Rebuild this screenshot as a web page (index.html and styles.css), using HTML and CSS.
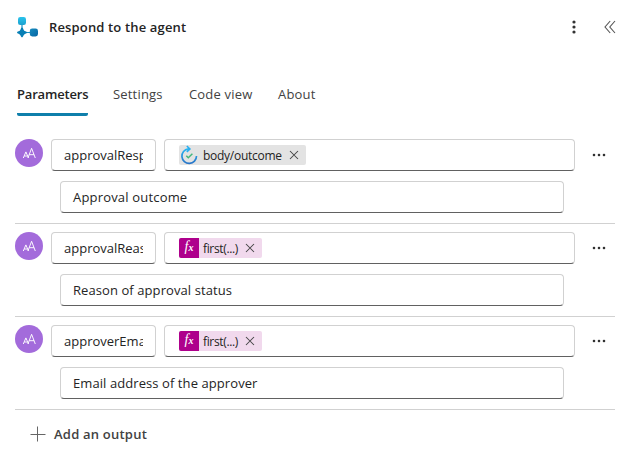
FILE: index.html
```html
<!DOCTYPE html>
<html lang="en">
<head>
<meta charset="utf-8">
<title>Respond to the agent</title>
<link rel="stylesheet" href="styles.css">
</head>
<body>
<svg class="defs" aria-hidden="true">
  <symbol id="close" viewBox="0 0 10 10"><path d="M1 1l8 8M9 1l-8 8" fill="none" stroke="#424242" stroke-width="1.05"/></symbol>
  <symbol id="more" viewBox="0 0 14 4"><path d="M1 1h2v2h-2zM6 1h2v2h-2zM11 1h2v2h-2z" fill="#333" stroke="#333" stroke-width=".3"/></symbol>
  <symbol id="text-type" viewBox="0 0 28 28"><path d="M8.3 19l2.6-6.1 2.6 6.1M9.3 17h3.2M12.9 19l3.7-9.7L20.3 19M14.2 15.7h4.8" fill="none" stroke="#fff" stroke-width=".95"/></symbol>
</svg>
<main class="panel">
  <header class="header">
    <svg class="logo" viewBox="0 0 22 22">
      <defs>
        <linearGradient id="node" x2="0" y2="1"><stop stop-color="#29c3ec"/><stop offset="1" stop-color="#1ba1cf"/></linearGradient>
        <linearGradient id="node-dark" x2="1" y2="1"><stop stop-color="#168bbe"/><stop offset="1" stop-color="#0766a4"/></linearGradient>
      </defs>
      <path d="M5 8v5M8 16.5h6" stroke="#1793c4" stroke-width="1.2"/>
      <rect x="1" y="1" width="8" height="8" rx="2.3" fill="url(#node)"/>
      <path d="M5 11.6Q6 11.6 6.5 13.4Q7 14.8 8.4 15.3Q10 15.8 10 16.5Q10 17.2 8.4 17.7Q7 18.2 6.5 19.6Q6 21.4 5 21.4Q4 21.4 3.5 19.6Q3 18.2 1.6 17.7Q0 17.2 0 16.5Q0 15.8 1.6 15.3Q3 14.8 3.5 13.4Q4 11.6 5 11.6Z" fill="#087fb5"/>
      <rect x="12.8" y="12.6" width="8.2" height="7.8" rx="2.4" fill="url(#node-dark)"/>
    </svg>
    <h1 class="title"><span>Respond to the agent</span></h1>
    <svg class="menu" viewBox="0 0 4 14"><g fill="#333"><circle cx="2" cy="2" r="1.6"/><circle cx="2" cy="7" r="1.6"/><circle cx="2" cy="12" r="1.6"/></g></svg>
    <svg class="collapse" viewBox="0 0 12 14"><path d="M6.2 1L1 7l5.2 6M11 1L5.8 7l5.2 6" fill="none" stroke="#555" stroke-width="1.1"/></svg>
  </header>
  <nav class="tabs">
    <span class="tab tab-active">Parameters</span>
    <span class="tab tab-settings">Settings</span>
    <span class="tab tab-code">Code view</span>
    <span class="tab tab-about">About</span>
  </nav>
  <section class="outputs">
    <div class="output">
      <div class="fields">
        <svg class="avatar"><use href="#text-type"/></svg>
        <div class="field name"><span class="clip">approvalResponse</span></div>
        <div class="field value">
          <span class="token token-body">
            <svg class="approval" viewBox="0 0 20 20"><defs><linearGradient id="ring" x2="0" y2="1"><stop stop-color="#27b5f2"/><stop offset="1" stop-color="#2875c8"/></linearGradient></defs><path d="M10.5 3.8H9.3A7.3 7.3 0 1 0 17.5 11" fill="none" stroke="url(#ring)" stroke-width="1.7"/><path d="M7.8 1l3.1 2.9-3.1 2.9" fill="none" stroke="#27aef0" stroke-width="1.6"/><path d="M7.3 10.7l2 2 4.1-4" fill="none" stroke="#43b77c" stroke-width="1.5"/></svg>
            <span class="token-label label-body">body/outcome</span><svg class="close"><use href="#close"/></svg>
          </span>
        </div>
        <svg class="more"><use href="#more"/></svg>
      </div>
      <div class="field description d1"><span>Approval outcome</span></div>
    </div>
    <div class="output">
      <div class="fields">
        <svg class="avatar"><use href="#text-type"/></svg>
        <div class="field name"><span class="clip">approvalReason</span></div>
        <div class="field value">
          <span class="token token-fx"><span class="fx">f<small>x</small></span><span class="token-label label-fx">first(...)</span><svg class="close"><use href="#close"/></svg></span>
        </div>
        <svg class="more"><use href="#more"/></svg>
      </div>
      <div class="field description d2"><span>Reason of approval status</span></div>
    </div>
    <div class="output">
      <div class="fields">
        <svg class="avatar"><use href="#text-type"/></svg>
        <div class="field name"><span class="clip">approverEmail</span></div>
        <div class="field value">
          <span class="token token-fx"><span class="fx">f<small>x</small></span><span class="token-label label-fx">first(...)</span><svg class="close"><use href="#close"/></svg></span>
        </div>
        <svg class="more"><use href="#more"/></svg>
      </div>
      <div class="field description d3"><span>Email address of the approver</span></div>
    </div>
  </section>
  <div class="add">
    <svg class="plus" viewBox="0 0 16 16"><path d="M7.5 .5v15M.5 8.5h15" stroke="#666" stroke-width="1"/></svg>
    <span>Add an output</span>
  </div>
</main>
</body>
</html>
```
FILE: styles.css
```css
* { box-sizing: border-box; }
body { margin: 0; background: #fff; color: #242424; font: 13px/20px "Open Sans", "Noto Sans", sans-serif; }
svg { display: block; flex: none; }
.defs { width: 0; height: 0; position: absolute; }
.panel { width: 628px; height: 458px; overflow: hidden; }
.header { display: flex; align-items: center; height: 54px; padding: 0 12px 0 17px; }
.logo { width: 22px; height: 22px; }
.title { flex: 1; margin: 0 0 0 10px; font-size: 13px; font-weight: 600; letter-spacing: .15px; white-space: nowrap; }
.menu { width: 4px; height: 14px; margin-right: 28px; }
.collapse { width: 12px; height: 14px; }
.tabs { display: flex; gap: 25px; padding: 30px 0 0 17px; height: 62px; }
.tab { white-space: nowrap; color: #424242; letter-spacing: .18px; }
.tab-active { width: 71px; height: 32px; color: #242424; font-weight: 600; letter-spacing: -.18px; border-bottom: 3px solid #0f7fab; border-radius: 0 0 2px 2px; }
.tab-settings { width: 51px; }
.tab-code { width: 64px; }
.outputs { margin: 15px 13px 0 15px; }
.output { height: 93px; padding-top: 8px; border-bottom: 1px solid #d1d1d1; }
.fields { display: flex; }
.avatar { width: 28px; height: 28px; margin-right: 8px; border-radius: 50%; background: #a36bdb; }
.field { display: flex; align-items: center; height: 32px; padding: 0 12px; border: 1px solid #d1d1d1; border-bottom-color: #616161; border-radius: 4px; white-space: nowrap; }
.name { width: 105px; margin-right: 8px; }
.clip { overflow: hidden; }
.value { width: 411px; padding-left: 14px; }
.more { width: 14px; height: 4px; margin: 14px 0 0 17px; }
.description { width: 504px; margin: 10px 0 0 45px; letter-spacing: .08px; }
.d1 { letter-spacing: .18px; }
.token { display: flex; align-items: center; height: 20px; border-radius: 2px; font-size: 12px; }
.token-body { width: 127px; background: #e3e3e3; }
.token-fx { width: 83px; background: #f1d9ed; }
.token-label { padding-top: 2px; }
.approval { width: 20px; height: 20px; margin-right: 4px; }
.fx { width: 20px; height: 20px; margin-right: 4px; border-radius: 2px 0 0 2px; background: #ae008c; color: #fff; font: italic 14px/18px "Liberation Serif", serif; text-align: center; }
.fx small { font-size: 10px; font-weight: bold; }
.label-body { width: 86px; letter-spacing: -.27px; }
.label-fx { width: 42px; letter-spacing: -.35px; }
.close { width: 10px; height: 10px; }
.add { display: flex; align-items: center; gap: 8px; height: 48px; padding: 0 0 0 30px; color: #424242; font-weight: 600; letter-spacing: .22px; }
.plus { width: 16px; height: 16px; }
```
